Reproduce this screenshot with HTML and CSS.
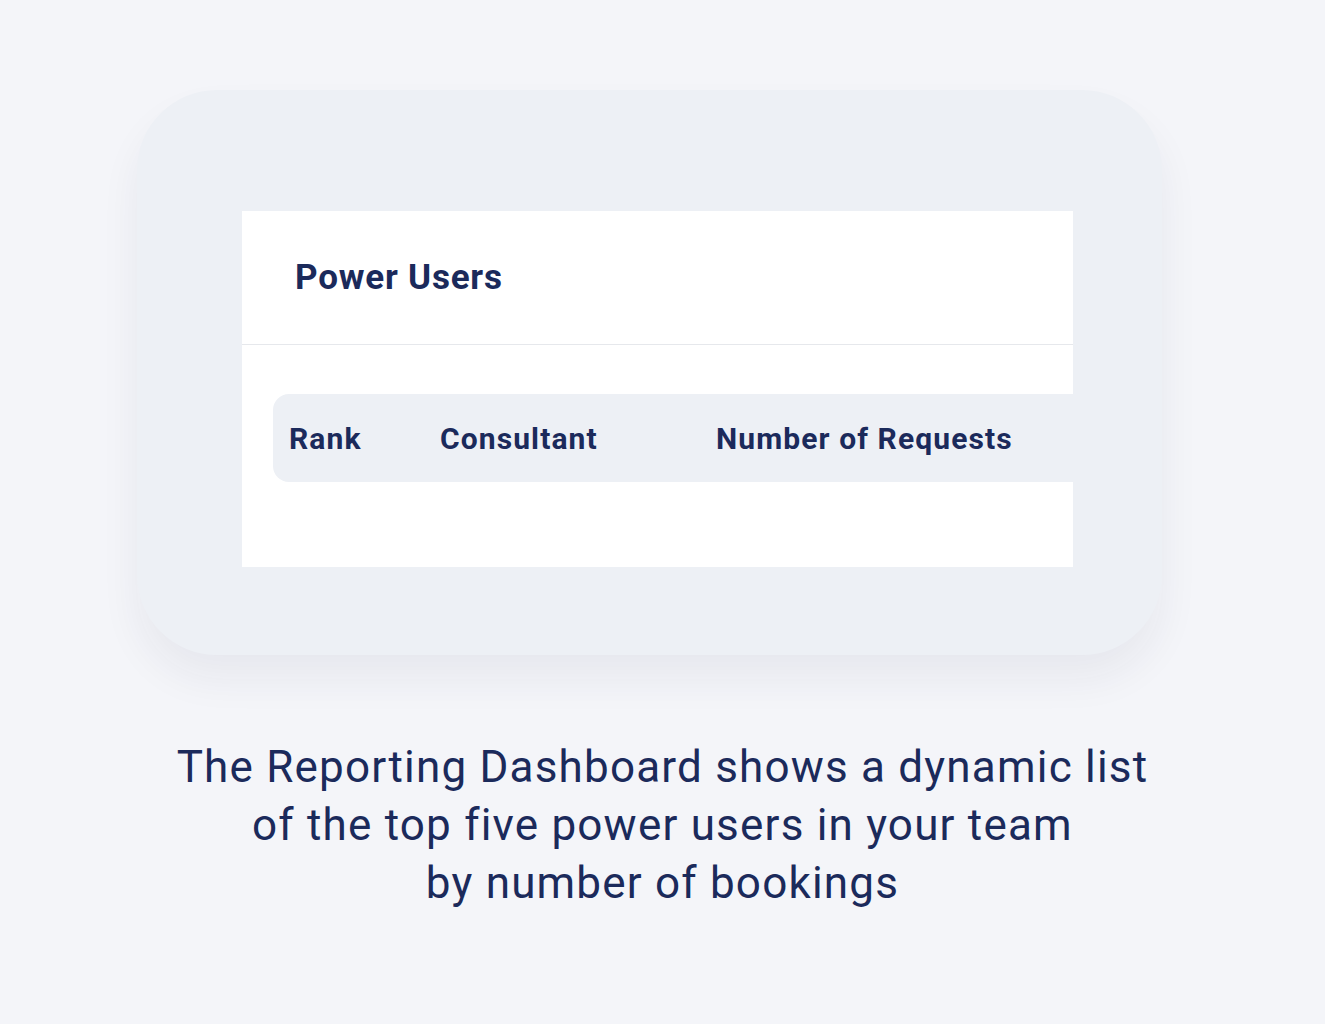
FILE: index.html
```html
<!DOCTYPE html>
<html lang="en">
<head>
    <meta charset="UTF-8">
    <title>Power Users</title>
    <link rel="stylesheet" href="styles.css">
</head>
<body>
    <div class="stage">
        <div class="card">
            <div class="panel">
                <div class="panel-head">
                    <h2>Power Users</h2>
                </div>
                <div class="panel-body">
                    <div class="table-head">
                        <span class="col-rank">Rank</span>
                        <span class="col-name">Consultant</span>
                        <span class="col-count">Number of Requests</span>
                    </div>
                </div>
            </div>
        </div>
        <p class="caption">The Reporting Dashboard shows a dynamic list<br>of the top five power users in your team<br>by number of bookings</p>
    </div>
</body>
</html>
```
FILE: styles.css
```css
:root { --bg: #f4f5f9; --card: #edf0f5; --navy: #1b2a5b; --line: #e6e8ec; }
body { margin: 0; background: var(--bg); color: var(--navy); font-family: 'Roboto', 'Liberation Sans', sans-serif; }
.stage { padding-top: 90px; }
.card { margin-left: 137px; width: 1025px; height: 565px; box-sizing: border-box; padding: 121px 89px 0 105px; background: var(--card); border-radius: 80px; box-shadow: 0 24px 40px rgba(30, 40, 70, 0.06); }
.panel { background: #fff; height: 356px; }
.panel-head { height: 134px; box-sizing: border-box; border-bottom: 1px solid var(--line); padding-left: 53px; display: flex; align-items: center; }
h2 { margin: 0; font-size: 35px; font-weight: 700; letter-spacing: 0.8px; }
.panel-body { padding: 49px 0 0 31px; }
.table-head { display: flex; align-items: center; height: 88px; background: var(--card); border-radius: 16px 0 0 16px; padding-left: 16px; font-size: 30px; font-weight: 700; letter-spacing: 1.1px; }
.col-rank { width: 151px; }
.col-name { width: 276px; }
.caption { margin: 83px 0 0; text-align: center; font-size: 44px; line-height: 58px; font-weight: 400; letter-spacing: 1.2px; }
```
